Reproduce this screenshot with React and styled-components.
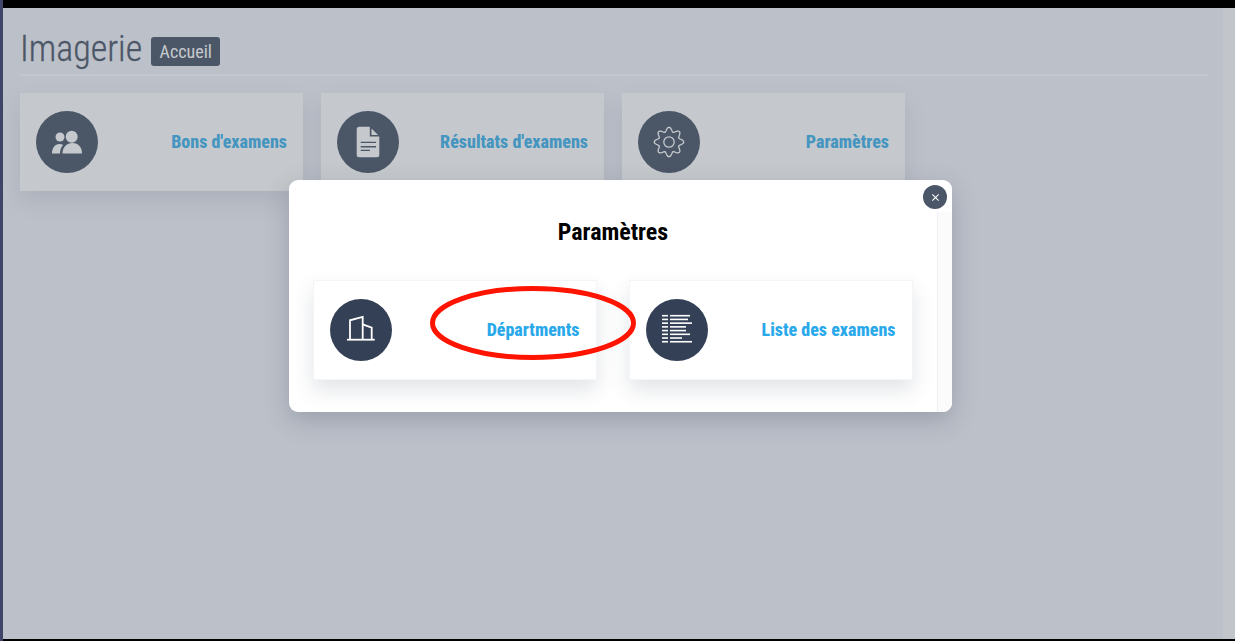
import React from 'react';
import styled, { createGlobalStyle } from 'styled-components';

const Global = createGlobalStyle`
  html, body { margin: 0; height: 100%; overflow: hidden; }
  body { font-family: Roboto, "Liberation Sans", sans-serif; background: #000; }
  #root { height: 100%; }
`;

const Frame = styled.div`
  height: 641px; width: 1235px; box-sizing: border-box; position: relative;
  padding: 8px 0 2px 3px;
  background: linear-gradient(90deg, #3f4468 0, #3f4468 3px, #000 3px);
  overflow: hidden;
`;
const Window = styled.div`
  height: 100%; display: flex; background: #f0f0f8; position: relative;
`;
const Main = styled.main`
  flex: 1; min-width: 0; padding: 16px 15px 0 17px;
`;
const Rail = styled.div`
  width: 12px; background: #fbfbfb;
`;
const Header = styled.header`
  display: flex; align-items: center; gap: 9px; height: 52px; box-sizing: border-box;
  border-bottom: 2px solid #fcfcfe;
`;
const Title = styled.h1`
  margin: 0; font-size: 36px; font-weight: 300; color: #344054; line-height: 48px;
  font-stretch: 75%; width: 122px; white-space: nowrap;
  -webkit-text-stroke: 0.3px #344054;
`;
const Badge = styled.span`
  display: block; background: #344054; color: #fff; border-radius: 3px;
  font-size: 18px; line-height: 29px; height: 29px; padding: 0 8.5px; font-stretch: 75%;
  margin-top: 5px;
`;
const Cards = styled.div`
  display: flex; gap: ${p => p.$gap}px; margin-top: ${p => p.$top}px;
`;
const Card = styled.a`
  flex: 0 0 ${p => p.$w}px; height: ${p => p.$h}px; box-sizing: border-box; position: relative;
  display: flex; align-items: center; justify-content: space-between; padding: ${p => p.$pad};
  background: #fff; border: 1px solid ${p => p.$edge};
  box-shadow: 0 10px 20px rgba(52, 64, 84, 0.14);
`;
const Circle = styled.span`
  width: 62px; height: 62px; border-radius: 50%; background: #344056; color: #fff;
  display: flex; align-items: center; justify-content: center; flex: none;
`;
const Label = styled.span`
  color: #29a9ea; font-size: 18px; font-weight: 800; font-stretch: 75%;
  white-space: nowrap; padding-bottom: 2px;
`;
const Overlay = styled.div`
  position: absolute; inset: 0; background: rgba(110, 120, 131, 0.4);
`;
const Modal = styled.section`
  position: absolute; left: 286px; top: 172px; width: 663px; height: 232px;
  background: #fff; border-radius: 9px; display: flex;
  box-shadow: 0 8px 24px rgba(52, 64, 84, 0.25);
`;
const ModalBody = styled.div`
  flex: 1; min-width: 0; padding: 32px 24px 32px; box-sizing: border-box;
`;
const ModalTitle = styled.h2`
  margin: 0 0 27px; height: 41px; line-height: 41px; text-align: center; color: #000;
  font-size: 24px; font-weight: 700; font-stretch: 75%;
`;
const ModalRail = styled.div`
  width: 14px; margin-top: 32px; background: #fbfbfb; border-left: 1px solid #eef0f3;
  border-bottom-right-radius: 9px;
`;
const Close = styled.button`
  position: absolute; right: 5px; top: 5px; width: 24px; height: 24px; border-radius: 50%;
  border: 0; padding: 0; background: #4b5668; color: #fff;
  display: flex; align-items: center; justify-content: center;
`;
const Ring = styled.svg`
  position: absolute; left: 116px; top: 5px; width: 206px; height: 74px; overflow: visible; z-index: 1;
`;

const Users = () => (
  <svg width="32" height="32" viewBox="0 0 32 32" fill="currentColor">
    <circle cx="9" cy="11" r="4.500" />
    <circle cx="20.700" cy="10.700" r="6" />
    <path d="M1 27.500c0-5.500 3-9.500 7.500-9.500 1.500 0 2.700.4 3.600 1-2 2-3 5-3.200 8.500z" />
    <path d="M11.500 27.500c0-6 4-10.500 10-10.500s9.500 4.500 9.500 10.500z" />
  </svg>
);
const Doc = () => (
  <svg width="32" height="32" viewBox="0 0 32 32" fill="currentColor">
    <path fillRule="evenodd" d="M7.200.700h10.600v9.800h9.500v18.300a2.500 2.500 0 0 1-2.500 2.500H7.200a2.500 2.500 0 0 1-2.500-2.500V3.200A2.500 2.500 0 0 1 7.200.700zM8.700 15.700v1.400H24v-1.400zm0 4.300v1.400H24V20zm0 3.700v1.400h9.300v-1.400z" />
    <path d="M19.500 2.500L26 9h-6.500z" />
  </svg>
);
const gearPath = () => {
  const pts = [];
  for (let i = 0; i < 144; i++) {
    const t = (i / 144) * Math.PI * 2;
    const r = 12.6 + 2.100 * Math.cos(8 * t);
    pts.push(`${(16 + r * Math.sin(t)).toFixed(2)} ${(16 - r * Math.cos(t)).toFixed(2)}`);
  }
  return `M${pts.join('L')}Z`;
};
const Gear = () => (
  <svg width="32" height="32" viewBox="0 0 32 32" fill="none" stroke="currentColor" strokeWidth="1.300">
    <path d={gearPath()} />
    <circle cx="16" cy="16" r="5.200" />
  </svg>
);
const Building = () => (
  <svg width="32" height="32" viewBox="0 0 32 32" fill="none" stroke="currentColor" strokeWidth="1.800">
    <path d="M2 25.700h27.700" />
    <path d="M5 25.700V6.300L17.700 3v22.700" />
    <path d="M17.700 10.300l9 3.400v12" />
  </svg>
);
const rows = [20, 18, 22, 16, 16, 20, 12, 22];
const ListIcon = () => (
  <svg width="32" height="32" viewBox="0 0 32 32" fill="currentColor">
    {rows.map((w, i) => (
      <g key={i}>
        <rect x="1" y={0.9 + i * 3.72} width="6" height="1.600" />
        <rect x="9" y={0.9 + i * 3.72} width={w} height="1.600" />
      </g>
    ))}
  </svg>
);

const pageCard = { $w: 283, $h: 98, $edge: '#fff', $pad: '0 15px' };
const modalCard = { $w: 283.5, $h: 100, $edge: '#f3f5f8', $pad: '0 16px' };

export default function App() {
  return (
    <Frame>
      <Global />
      <Window>
        <Main>
          <Header>
            <Title>Imagerie</Title>
            <Badge>Accueil</Badge>
          </Header>
          <Cards $gap={18} $top={17}>
            <Card {...pageCard}><Circle><Users /></Circle><Label>Bons d'examens</Label></Card>
            <Card {...pageCard}><Circle><Doc /></Circle><Label>Résultats d'examens</Label></Card>
            <Card {...pageCard}><Circle><Gear /></Circle><Label>Paramètres</Label></Card>
          </Cards>
        </Main>
        <Rail />
        <Overlay />
        <Modal>
          <ModalBody>
            <ModalTitle>Paramètres</ModalTitle>
            <Cards $gap={32.5} $top={0}>
              <Card {...modalCard}>
                <Circle><Building /></Circle>
                <Label>Départments</Label>
                <Ring viewBox="0 0 206 74" fill="none">
                  <ellipse cx="103" cy="37" rx="100.500" ry="34.500" stroke="#ff1400" strokeWidth="5" />
                </Ring>
              </Card>
              <Card {...modalCard}><Circle><ListIcon /></Circle><Label>Liste des examens</Label></Card>
            </Cards>
          </ModalBody>
          <ModalRail />
          <Close aria-label="Fermer">
            <svg width="9" height="9" viewBox="0 0 10 10" stroke="currentColor" strokeWidth="1.200"><path d="M1.500 1.500l7 7M8.500 1.500l-7 7" /></svg>
          </Close>
        </Modal>
      </Window>
    </Frame>
  );
}
